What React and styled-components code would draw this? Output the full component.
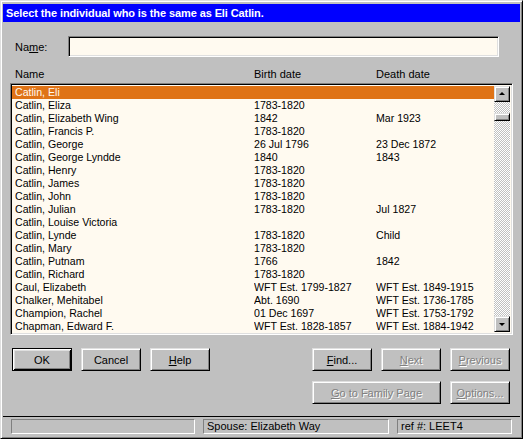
import React from "react";
import styled, { createGlobalStyle, css } from "styled-components";

const GlobalStyle = createGlobalStyle`
  html, body {
    margin: 0;
    padding: 0;
    background: #c0c0c0;
  }
  body {
    font-family: "Liberation Sans", Arial, sans-serif;
    font-size: 11px;
    color: #000;
  }
`;

// Window frame ---------------------

const Window = styled.div`
  width: 523px;
  height: 439px;
  box-sizing: border-box;
  background: #c0c0c0;
  border-top: 1px solid #dfdfdf;
  border-left: 1px solid #dfdfdf;
  border-right: 1px solid #000;
  border-bottom: 1px solid #000;
  box-shadow: inset 1px 1px #fff, inset -1px -1px #808080;
  padding: 3px 2px 2px 2px;
  display: flex;
  flex-direction: column;
  overflow: hidden;
`;

const TitleBar = styled.div`
  height: 18px;
  background: #0000ff;
  color: #fff;
  font-weight: bold;
  font-size: 11px;
  letter-spacing: -0.1px;
  line-height: 18px;
  padding-left: 3px;
  white-space: nowrap;
`;

const Body = styled.div`
  padding: 0 7px;
  display: flex;
  flex-direction: column;
`;

// Name search ---------------------

const NameRow = styled.div`
  display: flex;
  align-items: center;
  margin-top: 14px;
`;

const Label = styled.label`
  width: 53px;
  padding-left: 5px;
`;

const Sunken = css`
  box-sizing: border-box;
  border-top: 1px solid #808080;
  border-left: 1px solid #808080;
  border-right: 1px solid #fff;
  border-bottom: 1px solid #fff;
  box-shadow: inset 1px 1px #000, inset -1px -1px #dfdfdf;
`;

const TextInput = styled.input`
  ${Sunken};
  width: 432px;
  height: 21px;
  margin: 0 14px 0 0;
  background: #fffaf0;
  outline: none;
  padding: 2px 4px;
  font: inherit;
`;

// List ---------------------

const HeaderRow = styled.div`
  display: flex;
  height: 14px;
  line-height: 14px;
  margin-top: 10px;
  margin-bottom: 2px;
  padding-left: 5px;
`;

const HeaderCell = styled.div`
  width: ${(p) => p.$w}px;
`;

const ListBox = styled.div`
  ${Sunken};
  height: 252px;
  background: #fffaf0;
  padding: 1px 2px 2px 1px;
  display: flex;
`;

const Rows = styled.div`
  flex: 1;
  display: flex;
  flex-direction: column;
  padding-top: 1px;
`;

const Row = styled.div`
  display: flex;
  height: 13px;
  line-height: 13px;
  padding-left: 3px;
  font-size: 10.6px;
  white-space: nowrap;
  background: ${(p) => (p.$selected ? "#df7316" : "transparent")};
  color: ${(p) => (p.$selected ? "#fffaf0" : "#000")};
`;

const Cell = styled.div`
  width: ${(p) => p.$w}px;
  flex: ${(p) => (p.$w ? "none" : 1)};
  overflow: hidden;
`;

const ScrollBar = styled.div`
  width: 16px;
  display: flex;
  flex-direction: column;
  padding-top: 1px;
`;

const Raised = css`
  box-sizing: border-box;
  background: #c0c0c0;
  border-top: 1px solid #dfdfdf;
  border-left: 1px solid #dfdfdf;
  border-right: 1px solid #000;
  border-bottom: 1px solid #000;
  box-shadow: inset 1px 1px #fff, inset -1px -1px #808080;
`;

const ScrollButton = styled.div`
  ${Raised};
  height: 16px;
  display: flex;
  align-items: center;
  justify-content: center;
`;

const Arrow = styled.span`
  width: 0;
  height: 0;
  border-left: 3px solid transparent;
  border-right: 3px solid transparent;
  ${(p) =>
    p.$down
      ? "border-top: 3px solid #000; margin-top: 1px;"
      : "border-bottom: 3px solid #000; margin-top: -1px;"}
`;

const Track = styled.div`
  flex: 1;
  background: repeating-conic-gradient(#c0c0c0 0 25%, #fff 0 50%) 0 0 / 2px
    2px;
  padding-top: 11px;
`;

const Thumb = styled.div`
  ${Raised};
  height: 8px;
`;

// Buttons ---------------------

const ButtonArea = styled.div`
  display: flex;
  justify-content: space-between;
  align-items: flex-start;
  margin-top: 13px;
  padding: 0 3px 0 2px;
`;

const ButtonGroup = styled.div`
  display: grid;
  grid-template-columns: repeat(${(p) => p.$cols}, 60px);
  column-gap: 9px;
  row-gap: 10px;
`;

const Button = styled.button`
  ${Raised};
  grid-column: span ${(p) => p.$span || 1};
  height: 23px;
  padding: 0;
  font-family: "Liberation Sans", Arial, sans-serif;
  font-weight: normal;
  font-size: 11px;
  color: ${(p) => (p.disabled ? "#808080" : "#000")};
  text-shadow: ${(p) => (p.disabled ? "1px 1px #fff" : "none")};
  ${(p) =>
    p.$default &&
    css`
      border: 1px solid #000;
      box-shadow: inset 1px 1px #fff, inset -1px -1px #000,
        inset 2px 2px #dfdfdf, inset -2px -2px #808080;
    `}
  u {
    text-decoration: underline;
  }
`;

// Status bar ---------------------

const StatusBar = styled.div`
  margin-top: 12px;
  border-top: 1px solid #000;
  padding: 2px 0 0 8px;
  display: flex;
  gap: 8px;
`;

const StatusPanel = styled.div`
  box-sizing: border-box;
  width: ${(p) => p.$w}px;
  height: 15px;
  line-height: 13px;
  padding-left: 3px;
  border-top: 1px solid #808080;
  border-left: 1px solid #808080;
  border-right: 1px solid #fff;
  border-bottom: 1px solid #fff;
  white-space: nowrap;
`;

const people = [
  ["Catlin, Eli", "", ""],
  ["Catlin, Eliza", "1783-1820", ""],
  ["Catlin, Elizabeth Wing", "1842", "Mar 1923"],
  ["Catlin, Francis P.", "1783-1820", ""],
  ["Catlin, George", "26 Jul 1796", "23 Dec 1872"],
  ["Catlin, George Lyndde", "1840", "1843"],
  ["Catlin, Henry", "1783-1820", ""],
  ["Catlin, James", "1783-1820", ""],
  ["Catlin, John", "1783-1820", ""],
  ["Catlin, Julian", "1783-1820", "Jul 1827"],
  ["Catlin, Louise Victoria", "", ""],
  ["Catlin, Lynde", "1783-1820", "Child"],
  ["Catlin, Mary", "1783-1820", ""],
  ["Catlin, Putnam", "1766", "1842"],
  ["Catlin, Richard", "1783-1820", ""],
  ["Caul, Elizabeth", "WFT Est. 1799-1827", "WFT Est. 1849-1915"],
  ["Chalker, Mehitabel", "Abt. 1690", "WFT Est. 1736-1785"],
  ["Champion, Rachel", "01 Dec 1697", "WFT Est. 1753-1792"],
  ["Chapman, Edward F.", "WFT Est. 1828-1857", "WFT Est. 1884-1942"],
];

export default function App() {
  return (
    <>
      <GlobalStyle />
      <Window>
        <TitleBar>Select the individual who is the same as Eli Catlin.</TitleBar>
        <Body>
          <NameRow>
            <Label>
              Na<u>m</u>e:
            </Label>
            <TextInput defaultValue="" />
          </NameRow>

          <HeaderRow>
            <HeaderCell $w={239}>Name</HeaderCell>
            <HeaderCell $w={122}>Birth date</HeaderCell>
            <HeaderCell>Death date</HeaderCell>
          </HeaderRow>

          <ListBox>
            <Rows>
              {people.map(([name, birth, death], i) => (
                <Row key={name} $selected={i === 0}>
                  <Cell $w={239}>{name}</Cell>
                  <Cell $w={122}>{birth}</Cell>
                  <Cell>{death}</Cell>
                </Row>
              ))}
            </Rows>
            <ScrollBar>
              <ScrollButton>
                <Arrow />
              </ScrollButton>
              <Track>
                <Thumb />
              </Track>
              <ScrollButton>
                <Arrow $down />
              </ScrollButton>
            </ScrollBar>
          </ListBox>

          <ButtonArea>
            <ButtonGroup $cols={3}>
              <Button $default>OK</Button>
              <Button>Cancel</Button>
              <Button>
                <u>H</u>elp
              </Button>
            </ButtonGroup>
            <ButtonGroup $cols={3}>
              <Button>
                <u>F</u>ind...
              </Button>
              <Button disabled>
                <u>N</u>ext
              </Button>
              <Button disabled>
                <u>P</u>revious
              </Button>
              <Button disabled $span={2}>
                <u>G</u>o to Family Page
              </Button>
              <Button disabled>
                <u>O</u>ptions...
              </Button>
            </ButtonGroup>
          </ButtonArea>
        </Body>

        <StatusBar>
          <StatusPanel $w={184} />
          <StatusPanel $w={186}>Spouse: Elizabeth Way</StatusPanel>
          <StatusPanel $w={115}>ref #: LEET4</StatusPanel>
        </StatusBar>
      </Window>
    </>
  );
}
